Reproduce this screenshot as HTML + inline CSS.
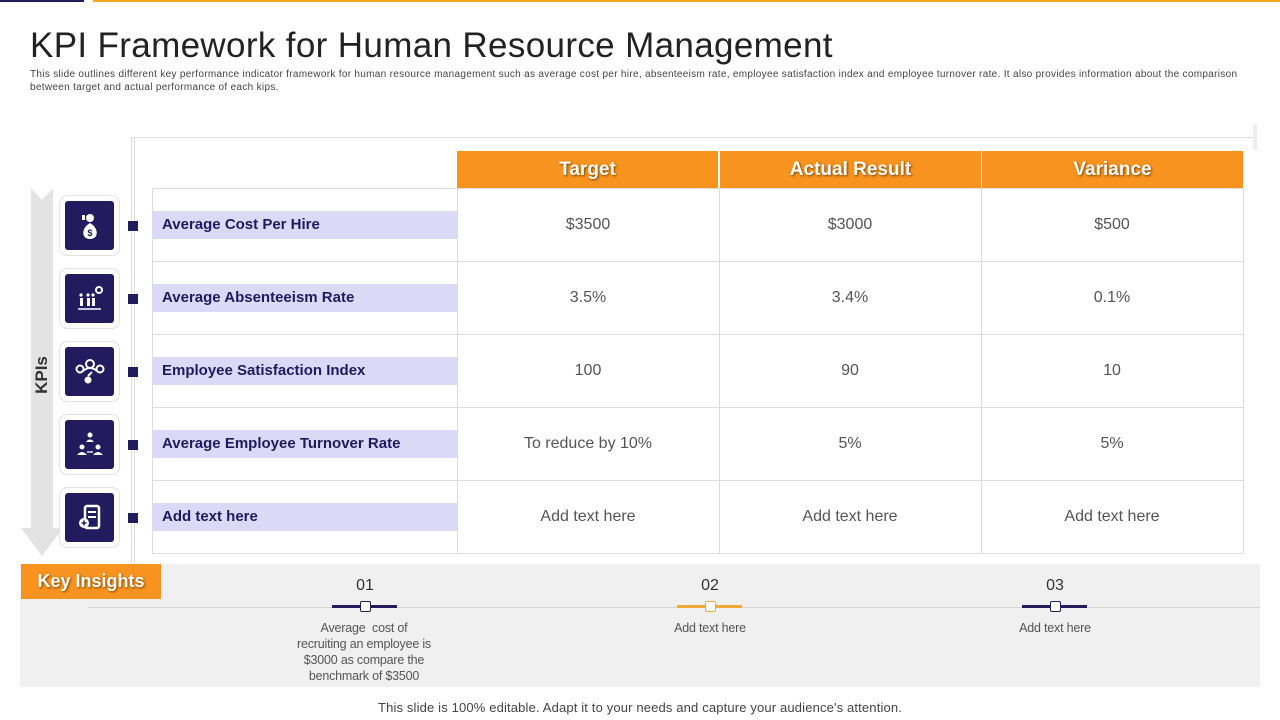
<!DOCTYPE html>
<html><head><meta charset="utf-8"><style>
*{margin:0;padding:0;box-sizing:border-box}
body{width:1280px;height:720px;position:relative;background:#fff;font-family:"Liberation Sans",sans-serif;overflow:hidden}
.a{position:absolute}
h1{position:absolute;left:30px;top:26px;font-size:35px;font-weight:normal;color:#222;letter-spacing:0.35px;white-space:nowrap}
.sub{left:30px;top:68px;font-size:10px;color:#444;line-height:13px;width:1240px;letter-spacing:0.31px;white-space:nowrap}
.hd{background:#f7931e;color:#fff;font-weight:bold;font-size:19px;text-align:center;line-height:37px;text-shadow:1px 1px 2px #7a4500;top:151px;height:37px}
.cell{color:#555;font-size:16px;text-align:center;line-height:73px;height:73px}
.lab{left:152px;width:305px;height:28px;background:#dcd9f7;color:#1f1a5e;font-weight:bold;font-size:15px;line-height:28px;padding-left:10px}
.ic{left:65px;width:49px;height:49px;background:#221c5e;border-radius:3px;box-shadow:0 0 0 5px #fff,0 0 0 6px #e4e4e4}
.sq{left:128px;width:10px;height:10px;background:#221c5e}
.num{font-size:16px;color:#333;text-align:center;width:100px}
.it{font-size:12.5px;color:#555;text-align:center;line-height:16px;letter-spacing:-0.2px}
</style></head><body>
<div class="a" style="left:0;top:0;width:84px;height:2px;background:#221c5e"></div>
<div class="a" style="left:93px;top:0;width:1187px;height:2px;background:#f7a81e"></div>
<h1>KPI Framework for Human Resource Management</h1>
<div class="a sub">This slide outlines different key performance indicator framework for human resource management such as average cost per hire, absenteeism rate, employee satisfaction index and employee turnover rate. It also provides information about the comparison<br>between target and actual performance of each kips.</div>

<div class="a" style="left:131px;top:137px;width:1px;height:430px;background:#ddd"></div>
<div class="a" style="left:134px;top:137px;width:1px;height:430px;background:#ddd"></div>
<div class="a" style="left:131px;top:137px;width:1125px;height:1px;background:#ddd"></div>
<div class="a" style="left:1253px;top:124px;width:4px;height:26px;background:#eee"></div>

<svg class="a" style="left:20px;top:188px" width="44" height="370"><polygon points="11,0 22,12 33,0 33,340 43,340 22,368 1,340 11,340" fill="#e3e3e3"/></svg>
<div class="a" style="left:22px;top:360px;width:40px;height:30px;transform:rotate(-90deg);font-weight:bold;font-size:17px;color:#333;text-align:center;line-height:30px">KPIs</div>

<div class="a" style="left:152px;top:188px;width:1092px;height:366px;border:1px solid #ddd"></div>
<div class="a" style="left:457px;top:188px;width:1px;height:366px;background:#ddd"></div>
<div class="a" style="left:719px;top:188px;width:1px;height:366px;background:#ddd"></div>
<div class="a" style="left:981px;top:188px;width:1px;height:366px;background:#ddd"></div>
<div class="a" style="left:152px;top:261px;width:1092px;height:1px;background:#ddd"></div>
<div class="a" style="left:152px;top:334px;width:1092px;height:1px;background:#ddd"></div>
<div class="a" style="left:152px;top:407px;width:1092px;height:1px;background:#ddd"></div>
<div class="a" style="left:152px;top:480px;width:1092px;height:1px;background:#ddd"></div>
<div class="a hd" style="left:457px;width:261px">Target</div>
<div class="a hd" style="left:720px;width:261px">Actual Result</div>
<div class="a hd" style="left:982px;width:261px">Variance</div>

<div class="a lab" style="top:211px">Average Cost Per Hire</div>
<div class="a lab" style="top:284px">Average Absenteeism Rate</div>
<div class="a lab" style="top:357px">Employee Satisfaction Index</div>
<div class="a lab" style="top:430px">Average Employee Turnover Rate</div>
<div class="a lab" style="top:503px">Add text here</div>

<div class="a cell" style="left:457px;top:188px;width:262px">$3500</div>
<div class="a cell" style="left:719px;top:188px;width:262px">$3000</div>
<div class="a cell" style="left:981px;top:188px;width:262px">$500</div>
<div class="a cell" style="left:457px;top:261px;width:262px">3.5%</div>
<div class="a cell" style="left:719px;top:261px;width:262px">3.4%</div>
<div class="a cell" style="left:981px;top:261px;width:262px">0.1%</div>
<div class="a cell" style="left:457px;top:334px;width:262px">100</div>
<div class="a cell" style="left:719px;top:334px;width:262px">90</div>
<div class="a cell" style="left:981px;top:334px;width:262px">10</div>
<div class="a cell" style="left:457px;top:407px;width:262px">To reduce by 10%</div>
<div class="a cell" style="left:719px;top:407px;width:262px">5%</div>
<div class="a cell" style="left:981px;top:407px;width:262px">5%</div>
<div class="a cell" style="left:457px;top:480px;width:262px">Add text here</div>
<div class="a cell" style="left:719px;top:480px;width:262px">Add text here</div>
<div class="a cell" style="left:981px;top:480px;width:262px">Add text here</div>

<div class="a ic" style="top:201px"><svg width="49" height="49"><circle cx="25" cy="17" r="4" fill="#fff"/><rect x="17" y="14" width="3" height="5" fill="#fff"/><path d="M25 22 C16 27 16 38 25 38 C34 38 34 27 25 22Z" fill="#fff"/><text x="25" y="35" font-size="9" font-weight="bold" fill="#221c5e" text-anchor="middle" font-family="Liberation Sans">$</text></svg></div>
<div class="a ic" style="top:274px"><svg width="49" height="49"><circle cx="34" cy="16" r="3" fill="none" stroke="#fff" stroke-width="2"/><rect x="15" y="24" width="3" height="8" fill="#fff"/><rect x="22" y="24" width="3" height="8" fill="#fff"/><rect x="27" y="24" width="3" height="8" fill="#fff"/><circle cx="16" cy="21" r="1.6" fill="#fff"/><circle cx="23" cy="21" r="1.6" fill="#fff"/><circle cx="28" cy="21" r="1.6" fill="#fff"/><path d="M13 35 H36" stroke="#fff" stroke-width="1.5"/></svg></div>
<div class="a ic" style="top:347px"><svg width="49" height="49"><circle cx="25" cy="17" r="4" fill="none" stroke="#fff" stroke-width="2"/><circle cx="15" cy="22" r="3.5" fill="none" stroke="#fff" stroke-width="2"/><circle cx="35" cy="22" r="3.5" fill="none" stroke="#fff" stroke-width="2"/><path d="M18 24 Q25 18 32 24" stroke="#fff" stroke-width="2" fill="none"/><circle cx="23" cy="33" r="3.5" fill="#fff"/><path d="M23 29 L27 25" stroke="#fff" stroke-width="2"/></svg></div>
<div class="a ic" style="top:420px"><svg width="49" height="49"><circle cx="25" cy="15" r="2.5" fill="#fff"/><path d="M21 22 Q25 17 29 22Z" fill="#fff"/><circle cx="17" cy="27" r="2.5" fill="#fff"/><path d="M12 35 Q17 29 22 35Z" fill="#fff"/><circle cx="33" cy="27" r="2.5" fill="#fff"/><path d="M28 35 Q33 29 38 35Z" fill="#fff"/><path d="M22 32 H28" stroke="#fff" stroke-width="1.3"/></svg></div>
<div class="a ic" style="top:493px"><svg width="49" height="49"><rect x="20" y="13" width="14" height="22" rx="2" fill="none" stroke="#fff" stroke-width="2.5"/><path d="M23 19 H31 M23 24 H31" stroke="#fff" stroke-width="2"/><circle cx="19" cy="30" r="5" fill="#fff"/><path d="M16.5 30 H21.5 M19 27.5 V32.5" stroke="#221c5e" stroke-width="1.5"/></svg></div>
<div class="a sq" style="top:221px"></div>
<div class="a sq" style="top:294px"></div>
<div class="a sq" style="top:367px"></div>
<div class="a sq" style="top:440px"></div>
<div class="a sq" style="top:513px"></div>

<div class="a" style="left:20px;top:564px;width:1240px;height:123px;background:#f0f0f0"></div>
<div class="a" style="left:88px;top:607px;width:1172px;height:1px;background:#d6d6d6"></div>
<div class="a" style="left:21px;top:564px;width:140px;height:35px;background:#f7931e;color:#fff;font-weight:bold;font-size:18px;line-height:35px;text-align:center;text-shadow:1px 1px 2px #7a4500">Key Insights</div>

<div class="a num" style="left:315px;top:577px">01</div>
<div class="a" style="left:332px;top:605px;width:65px;height:3px;background:#221c5e"></div>
<div class="a" style="left:360px;top:601px;width:11px;height:11px;background:#fff;border:1px solid #221c5e;border-radius:2px"></div>
<div class="a it" style="left:284px;top:620px;width:160px">Average&nbsp; cost of<br>recruiting an employee is<br>$3000 as compare the<br>benchmark of $3500</div>

<div class="a num" style="left:660px;top:577px">02</div>
<div class="a" style="left:677px;top:605px;width:65px;height:3px;background:#f2a93b"></div>
<div class="a" style="left:705px;top:601px;width:11px;height:11px;background:#fff;border:1px solid #f2a93b;border-radius:2px"></div>
<div class="a it" style="left:630px;top:620px;width:160px">Add text here</div>

<div class="a num" style="left:1005px;top:577px">03</div>
<div class="a" style="left:1022px;top:605px;width:65px;height:3px;background:#221c5e"></div>
<div class="a" style="left:1050px;top:601px;width:11px;height:11px;background:#fff;border:1px solid #221c5e;border-radius:2px"></div>
<div class="a it" style="left:975px;top:620px;width:160px">Add text here</div>

<div class="a" style="left:0;top:700px;width:1280px;text-align:center;font-size:13px;color:#444;letter-spacing:0.15px">This slide is 100% editable. Adapt it to your needs and capture your audience's attention.</div>
</body></html>
